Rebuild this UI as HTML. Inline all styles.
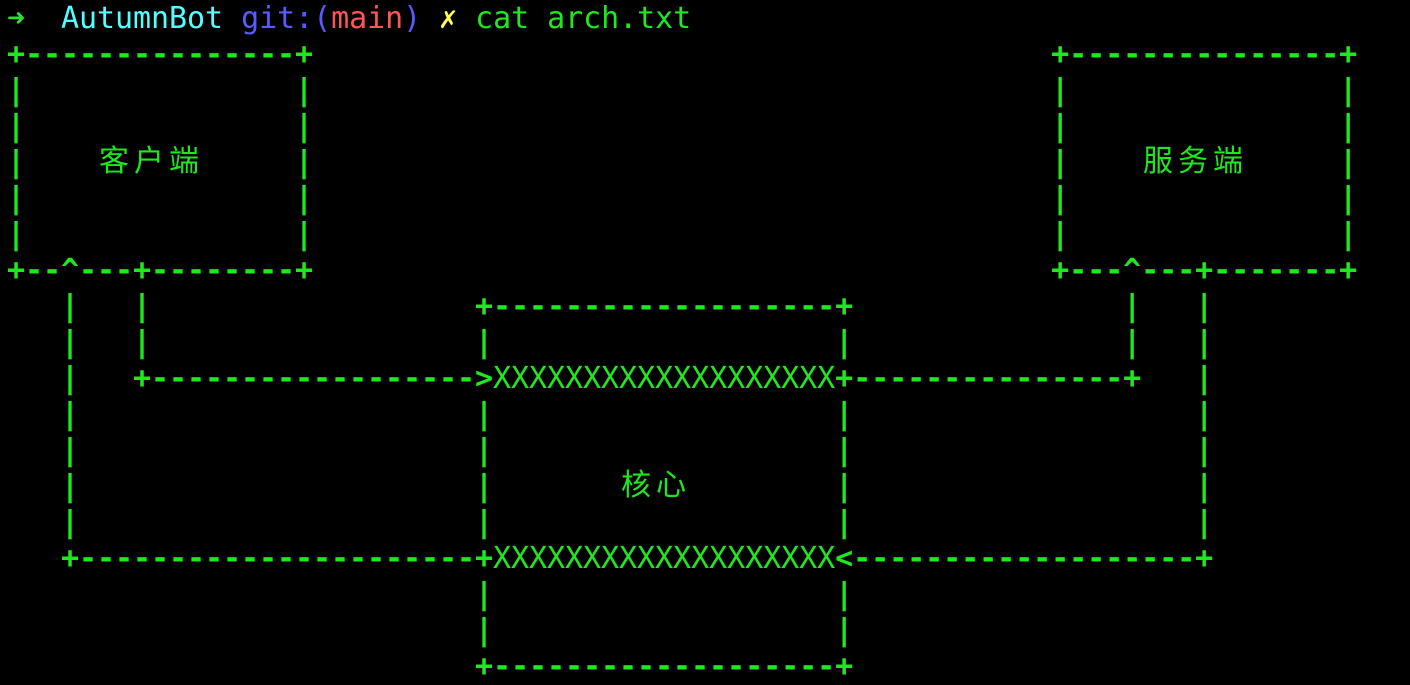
<!DOCTYPE html>
<html><head><meta charset="utf-8"><style>
html,body{margin:0;padding:0;background:#000;width:1410px;height:682px;overflow:hidden}
pre{position:absolute;left:7px;top:1px;margin:0;font-family:"DejaVu Sans Mono","Liberation Mono",monospace;font-size:30px;line-height:36px;color:#1ee81e;font-weight:bold;letter-spacing:-0.06px}
.p,.x{font-weight:normal}
.l{position:absolute;font-family:"Liberation Sans","Noto Sans CJK SC",sans-serif;font-size:30px;line-height:36px;color:#1ee81e;letter-spacing:5px}
.g{color:#2ee02e}.c{color:#55ffff}.b{color:#5a5aff}.r{color:#ff5555}.y{color:#ffff55}
</style></head><body>
<pre><span class="p"><span class="g">➜</span>  <span class="c">AutumnBot</span> <span class="b">git:(</span><span class="r">main</span><span class="b">)</span> <span class="y">✗</span> cat arch.txt</span>
+---------------+                                         +---------------+
|               |                                         |               |
|               |                                         |               |
|               |                                         |               |
|               |                                         |               |
|               |                                         |               |
+--^---+--------+                                         +---^---+-------+
   |   |                  +-------------------+               |   |
   |   |                  |                   |               |   |
   |   +------------------&gt;<span class="x">XXXXXXXXXXXXXXXXXXX</span>+---------------+   |
   |                      |                   |                   |
   |                      |                   |                   |
   |                      |                   |                   |
   |                      |                   |                   |
   +----------------------+<span class="x">XXXXXXXXXXXXXXXXXXX</span>&lt;-------------------+
                          |                   |
                          |                   |
                          +-------------------+</pre>
<div class="l" style="left:99px;top:144px">客户端</div>
<div class="l" style="left:1143px;top:144px">服务端</div>
<div class="l" style="left:621px;top:468px">核心</div>
</body></html>
